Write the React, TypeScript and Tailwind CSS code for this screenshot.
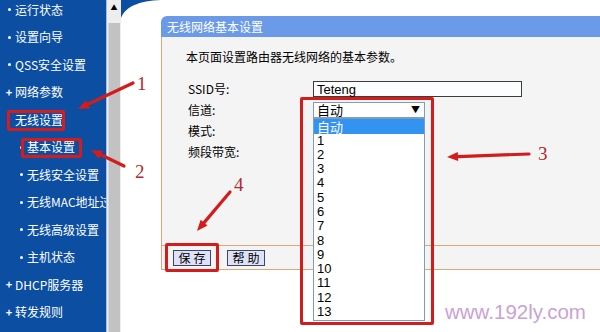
import React from 'react'

type MenuItem = { t: string; mark: 'dot' | 'plus' | 'tiny'; sub?: boolean }

const menu: MenuItem[] = [
  { t: '运行状态', mark: 'dot' },
  { t: '设置向导', mark: 'dot' },
  { t: 'QSS安全设置', mark: 'dot' },
  { t: '网络参数', mark: 'plus' },
  { t: '无线设置', mark: 'tiny' },
  { t: '基本设置', mark: 'dot', sub: true },
  { t: '无线安全设置', mark: 'dot', sub: true },
  { t: '无线MAC地址过滤', mark: 'dot', sub: true },
  { t: '无线高级设置', mark: 'dot', sub: true },
  { t: '主机状态', mark: 'dot', sub: true },
  { t: 'DHCP服务器', mark: 'plus' },
  { t: '转发规则', mark: 'plus' },
]

const channels = ['1', '2', '3', '4', '5', '6', '7', '8', '9', '10', '11', '12', '13']

// red annotation arrow: line + head at (x2, y2)
const Arrow = ({ x1, y1, x2, y2 }: { x1: number; y1: number; x2: number; y2: number }) => {
  const a = Math.atan2(y2 - y1, x2 - x1)
  const len = 11
  const w = 4.5
  const bx = x2 - Math.cos(a) * len
  const by = y2 - Math.sin(a) * len
  const px = -Math.sin(a) * w
  const py = Math.cos(a) * w
  return (
    <g>
      <line x1={x1} y1={y1} x2={bx} y2={by} stroke="#d41c1c" strokeWidth={3.2} strokeLinecap="round" />
      <polygon points={`${x2},${y2} ${bx + px},${by + py} ${bx - px},${by - py}`} fill="#d41c1c" />
    </g>
  )
}

const SideMenu = () => (
  <div className="w-[107px] shrink-0 bg-[#0b4ea2] border-r border-[#9fc0e6] overflow-hidden whitespace-nowrap text-white text-[12px]">
    <div className="-mt-[4px]">
      {menu.map((m) => (
        <div key={m.t} className={`h-[27.5px] flex items-center ${m.sub ? 'pl-[16px]' : 'pl-[4px]'}`}>
          <span className="w-[10px] shrink-0 flex justify-center">
            {m.mark === 'plus' && <span className="text-[11px] font-bold leading-none">+</span>}
            {m.mark === 'dot' && <span className="w-[3px] h-[3px] rounded-full bg-white" />}
            {m.mark === 'tiny' && <span className="w-[2px] h-[2px] bg-white" />}
          </span>
          <span className="pl-[1px] shrink-0">{m.t}</span>
        </div>
      ))}
    </div>
  </div>
)

const ScrollBar = () => (
  <div className="w-[14px] shrink-0 bg-[#eeeeee] flex flex-col">
    <div className="h-[23px] flex justify-center pt-[4px] text-[7px] text-black leading-none">▲</div>
    <div className="flex-1 mx-[1px] bg-[#c2c2c2] border-l border-[#d8d8d8]" />
  </div>
)

const Panel = () => (
  <div className="mt-[16px] ml-[40px] w-[480px] text-[12px] text-black">
    <div className="h-[21px] bg-[#6a9ae8] rounded-tl-[6px] flex items-center pl-[6px] text-white">
      无线网络基本设置
    </div>
    <div className="h-[209px] bg-[#f4f4f4] border-l border-b border-[#d9a878] pt-[12px] pl-[24px]">
      <div className="leading-[16px]">本页面设置路由器无线网络的基本参数。</div>
      <div className="mt-[14px] pl-[2px]">
        <div className="h-[20px] flex items-center">
          <span className="w-[125px]">SSID号:</span>
          <div className="w-[209px] h-[16px] border border-[#3c3c3c] bg-[#fbfdff] flex items-center pl-[3px] font-['Liberation_Sans',sans-serif] text-[13px] leading-none">
            Teteng
          </div>
        </div>
        <div className="h-[21px] flex items-center">
          <span className="w-[125px]">信道:</span>
          <div className="relative">
            <div className="w-[112px] h-[16px] border border-[#7f9db9] bg-white flex items-center justify-between pl-[3px] pr-[4px] text-[13px] leading-none">
              <span>自动</span>
              <span className="text-[9px] leading-none">▼</span>
            </div>
            <div className="absolute left-0 top-full w-[112px] border border-[#7f9db9] bg-white text-[13px] pb-[1px]">
              <div className="h-[15px] bg-[#3393f0] text-white pl-[3px] leading-[15px]">自动</div>
              {channels.map((c) => (
                <div key={c} className="h-[14.3px] leading-[14.3px] pl-[3px] font-['Liberation_Sans',sans-serif]">
                  {c}
                </div>
              ))}
            </div>
          </div>
        </div>
        <div className="h-[21px] flex items-center">模式:</div>
        <div className="h-[21px] flex items-center">频段带宽:</div>
      </div>
    </div>
    <div className="h-[24px] bg-[#f4f4f4] border-l border-b border-[#d9a878] flex items-center pl-[11px] gap-[16px]">
      <button className="w-[38px] h-[16px] border border-[#3a4668] bg-[#dfe2f7] text-[12px] leading-none tracking-[3px] pl-[3px]">
        保存
      </button>
      <button className="w-[38px] h-[16px] border border-[#3a4668] bg-[#dfe2f7] text-[12px] leading-none tracking-[3px] pl-[3px]">
        帮助
      </button>
    </div>
  </div>
)

export default function App() {
  return (
    <div className="relative w-[600px] h-[332px] overflow-hidden flex bg-white font-['Noto_Sans_CJK_SC','Noto_Sans',sans-serif]">
      <SideMenu />
      <ScrollBar />
      <div className="relative flex-1 bg-white overflow-hidden">
        <svg className="absolute left-0 top-0" width="44" height="19" viewBox="0 0 44 19">
          <path d="M0 0 H44 C22 0 5 5 0 18 Z" fill="#0b4ea2" />
        </svg>
        <Panel />
      </div>

      {/* annotations */}
      <div className="absolute left-[7px] top-[110px] w-[58px] h-[21px] border-[3px] border-[#d41c1c] rounded-[2px]" />
      <div className="absolute left-[21px] top-[138px] w-[61px] h-[20px] border-[3px] border-[#d41c1c] rounded-[2px]" />
      <div className="absolute left-[300px] top-[97px] w-[134px] h-[228px] border-[3px] border-[#d41c1c] rounded-[2px]" />
      <div className="absolute left-[165px] top-[243px] w-[54px] h-[29px] border-[3px] border-[#d41c1c] rounded-[2px]" />

      <svg className="absolute left-0 top-0 pointer-events-none" width="600" height="332" viewBox="0 0 600 332">
        <Arrow x1={133} y1={83} x2={78} y2={109} />
        <Arrow x1={124} y1={166} x2={91} y2={150} />
        <Arrow x1={529} y1={154} x2={447} y2={157} />
        <Arrow x1={230} y1={192} x2={197} y2={231} />
      </svg>

      <span className="absolute left-[137px] top-[74px] text-[19px] leading-[20px] text-[#b3292c] font-['Liberation_Serif',serif]">1</span>
      <span className="absolute left-[135px] top-[162px] text-[19px] leading-[20px] text-[#b3292c] font-['Liberation_Serif',serif]">2</span>
      <span className="absolute left-[538px] top-[144px] text-[19px] leading-[20px] text-[#b3292c] font-['Liberation_Serif',serif]">3</span>
      <span className="absolute left-[234px] top-[175px] text-[19px] leading-[20px] text-[#b3292c] font-['Liberation_Serif',serif]">4</span>

      <span className="absolute left-[445px] top-[300px] text-[20.5px] leading-[24px] text-[#c9a2d6] font-['Liberation_Sans',sans-serif]">
        www.192ly.com
      </span>
    </div>
  )
}
